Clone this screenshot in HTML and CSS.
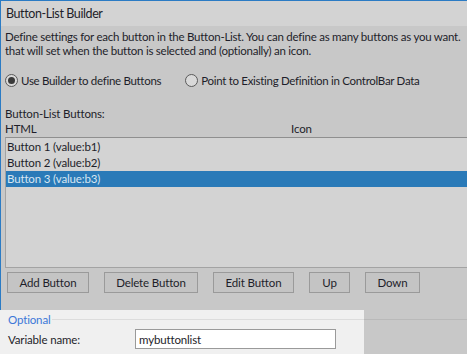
FILE: index.html
```html
<!DOCTYPE html>
<html lang="en">
<head>
  <meta charset="UTF-8">
  <link rel="stylesheet" href="styles.css">
</head>
<body>
  <div class="window">
    <div class="titlebar">Button-List Builder</div>

    <div class="main">
      <p class="desc">Define settings for each button in the Button-List. You can define as many buttons as you want.<br>that will set when the button is selected and (optionally) an icon.</p>

      <div class="radios">
        <label class="radio"><span class="dot checked"></span>Use Builder to define Buttons</label>
        <label class="radio"><span class="dot"></span>Point to Existing Definition in ControlBar Data</label>
      </div>

      <div class="list-label">Button-List Buttons:</div>
      <div class="cols">
        <span class="col-html">HTML</span>
        <span class="col-icon">Icon</span>
      </div>

      <div class="listbox">
        <div class="row">Button 1 (value:b1)</div>
        <div class="row">Button 2 (value:b2)</div>
        <div class="row selected">Button 3 (value:b3)</div>
      </div>

      <div class="buttons">
        <button class="btn btn-add">Add Button</button>
        <button class="btn btn-delete">Delete Button</button>
        <button class="btn btn-edit">Edit Button</button>
        <button class="btn btn-up">Up</button>
        <button class="btn btn-down">Down</button>
      </div>
    </div>

    <div class="bottom">
      <div class="optional">
        <div class="legend-line"><span class="legend">Optional</span></div>
        <div class="field">
          <span class="field-label">Variable name:</span>
          <input class="field-input" type="text" value="mybuttonlist">
        </div>
      </div>
      <div class="rest"><div class="rest-line"></div></div>
    </div>
  </div>
</body>
</html>
```

FILE: styles.css
```css
body {
  margin: 0;
  width: 467px;
  height: 354px;
  overflow: hidden;
  background-color: #c8c8c8;
  font-family: 'Lato', 'Noto Sans', sans-serif;
  font-size: 11.5px;
  letter-spacing: -0.15px;
  color: #1e1e2a;
}

.window {
  height: 354px;
  display: flex;
  flex-direction: column;
}

.titlebar {
  height: 25px;
  line-height: 25px;
  padding-left: 5px;
  font-size: 12.5px;
  letter-spacing: -0.4px;
  background-color: #d3d3d3;
  border-top: 1px solid #2b7bc4;
  border-left: 1px solid #2b7bc4;
}

.main {
  flex: 1;
  display: flex;
  flex-direction: column;
  padding-left: 4px;
  border-left: 1px solid #2b7bc4;
  white-space: nowrap;
}

.desc {
  margin: 4px 0 0 0;
  line-height: 14px;
  letter-spacing: -0.25px;
}

.radios {
  display: flex;
  gap: 24px;
  margin-top: 14px;
  height: 16px;
  align-items: center;
  letter-spacing: -0.3px;
}

.radio {
  display: flex;
  align-items: center;
  gap: 3px;
}

.dot {
  width: 11px;
  height: 11px;
  border: 1px solid #5a5a5a;
  border-radius: 50%;
  background-color: #d9d9d9;
  display: flex;
  align-items: center;
  justify-content: center;
}

.dot.checked::after {
  content: '';
  width: 7px;
  height: 7px;
  border-radius: 50%;
  background-color: #3a3a3a;
}

.list-label {
  margin-top: 18px;
  line-height: 15px;
}

.cols {
  display: flex;
  line-height: 15px;
}

.col-html {
  width: 286px;
}

.listbox {
  margin-top: 1px;
  height: 128px;
  border-top: 1px solid #8f8f8f;
  border-left: 1px solid #a3a3a3;
  border-bottom: 1px solid #a3a3a3;
  background-color: #d3d3d3;
  padding-top: 1px;
}

.row {
  height: 16px;
  line-height: 16px;
  padding-left: 1px;
}

.row.selected {
  background-color: #2a7ab8;
  color: #d7e6f2;
}

.buttons {
  display: flex;
  gap: 15px;
  margin-top: 4px;
  padding-left: 2px;
}

.btn {
  height: 21px;
  padding: 0;
  font-family: inherit;
  font-size: 11.5px;
  letter-spacing: -0.15px;
  color: #1e1e2a;
  background-color: #c4c4c4;
  border: 1px solid #9a9a9a;
}

.btn-add { width: 82px; }
.btn-delete { width: 94px; }
.btn-edit { width: 81px; }
.btn-up { width: 41px; }
.btn-down { width: 55px; }

.bottom {
  height: 44px;
  display: flex;
}

.optional {
  width: 364px;
  background-color: #f0f0f0;
  padding-top: 9px;
}

.legend-line {
  border-top: 1px solid #dcdcdc;
  margin-left: 6px;
  height: 0;
}

.legend {
  display: inline-block;
  position: relative;
  top: -9px;
  padding: 0 1px 0 2px;
  background-color: #f0f0f0;
  color: #3c78d8;
  line-height: 17px;
}

.field {
  display: flex;
  align-items: center;
  margin-top: 9px;
  padding-left: 8px;
}

.field-label {
  width: 127px;
}

.field-input {
  width: 196px;
  height: 18px;
  padding: 0 0 0 3px;
  border: 1px solid #9a9a9a;
  font-family: inherit;
  font-size: 11.5px;
  letter-spacing: -0.15px;
  color: #1e1e2a;
  background-color: #ffffff;
  outline: none;
}

.rest {
  flex: 1;
  padding-top: 9px;
}

.rest-line {
  border-top: 1px solid #b9b9b9;
}
```
